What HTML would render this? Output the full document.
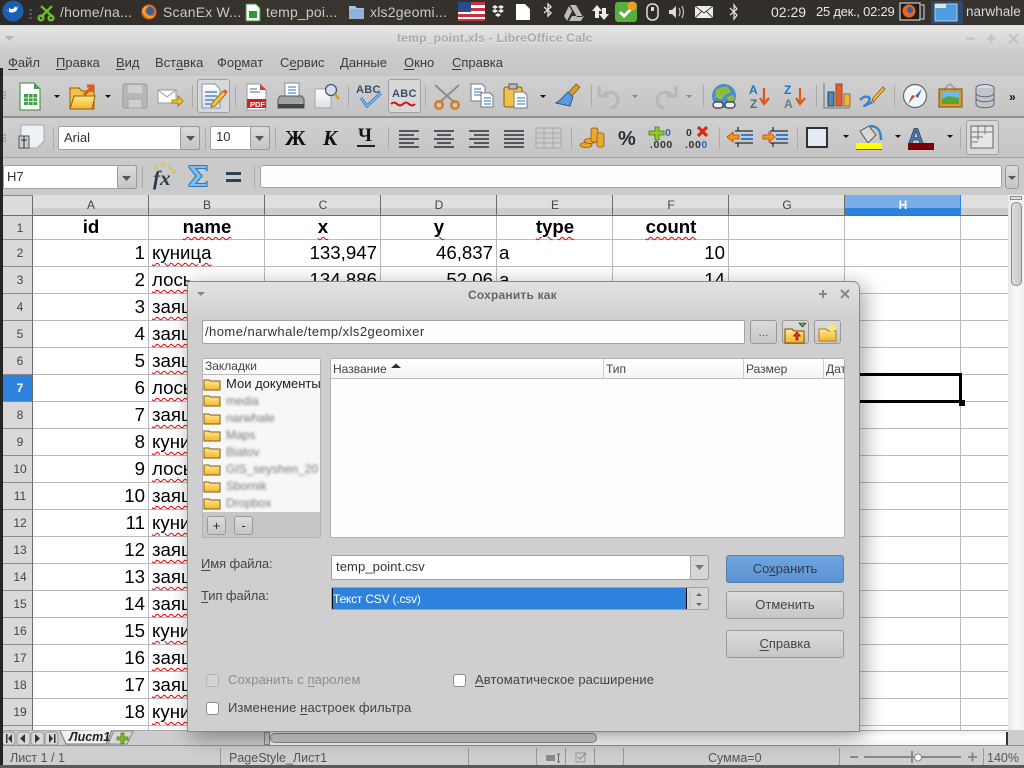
<!DOCTYPE html>
<html lang="ru"><head><meta charset="utf-8"><title>temp_point.xls - LibreOffice Calc</title>
<style>
html,body{margin:0;padding:0;width:1024px;height:768px;overflow:hidden;background:#ccc}
body{position:relative;font-family:"Liberation Sans","Noto Sans CJK SC",sans-serif;font-size:13px;color:#3c3c3c}
.a,.t,.c{position:absolute}
.t{white-space:nowrap;line-height:16px}
u{text-decoration:underline;text-underline-offset:2px;text-decoration-thickness:1px}
.p{color:#c9cbc8;top:3px;line-height:18px;font-size:14px;z-index:2}
.btn{position:absolute;box-sizing:border-box;border:1px solid #9a9a9a;border-radius:3px;background:linear-gradient(#dcdcdc,#c6c6c6);text-align:center}
.in{position:absolute;box-sizing:border-box;background:#fff;border:1px solid #a2a2a2;border-radius:2px}
.hd{position:absolute;top:195px;height:20px;width:116px;box-sizing:border-box;border-right:1px solid #6c6c6c;background:linear-gradient(#dfdfdf 0 65%,#cdcdcd 65%);text-align:center;line-height:21px;font-size:12px;color:#444;padding-left:1px}
.rn{position:absolute;left:3px;width:29px;box-sizing:border-box;border-bottom:1px solid #8c8c8c;text-align:center;font-size:12px;color:#444;padding-left:5px}
.c{white-space:nowrap;font-size:18.67px;line-height:27px;height:27px;color:#000}
.r{text-align:right;width:110px;left:35px}
.n{left:152px;text-decoration:underline wavy #e00;text-decoration-thickness:1px;text-underline-offset:3px}
.h{font-weight:bold;text-align:center;width:116px;top:213px;text-decoration:underline wavy #e00;text-decoration-thickness:1px;text-underline-offset:3px}
.bk{left:226px;color:#777;filter:blur(1.3px);font-size:12px}
.cb{position:absolute;width:13px;height:13px;box-sizing:border-box;background:#fff;border:1px solid #8a8a8a;border-radius:3px}
.sep{position:absolute;width:1px;background:#aaa}
</style></head><body>

<!-- top panel -->
<div class="a" style="left:0;top:0;width:1024px;height:25px;background:linear-gradient(90deg,#2d2a27,#3a352f 30%,#2f2b27 60%,#37332e)"></div>
<div class="a" style="left:0;top:25px;width:1024px;height:1px;background:#ddd"></div>
<div class="a" style="left:931px;top:1px;width:32px;height:23px;background:#2b4a6e"></div>
<div class="t p" style="left:60px;letter-spacing:.2px">/home/na...</div>
<div class="t p" style="left:163px;letter-spacing:.2px">ScanEx W...</div>
<div class="t p" style="left:266px;letter-spacing:.2px">temp_poi...</div>
<div class="t p" style="left:370px;letter-spacing:.2px">xls2geomi...</div>
<div class="t p" style="left:771px;color:#e8e8e8">02:29</div>
<div class="t p" style="left:816px;color:#e8e8e8;font-size:13px;letter-spacing:-.25px">25 дек., 02:29</div>
<div class="t p" style="left:966px;color:#d8d8d8;font-size:13.5px">narwhale</div>

<!-- window chrome -->
<div class="a" style="left:0;top:26px;width:1024px;height:50px;background:linear-gradient(#e6e6e6,#cbcbcb 55%,#c6c6c6)"></div>
<div class="a" style="left:0;top:76px;width:1024px;height:40px;background:linear-gradient(#d0d0d0,#c4c4c4)"></div>
<div class="a" style="left:0;top:116px;width:1024px;height:2px;background:#8f8f8f"></div>
<div class="a" style="left:0;top:118px;width:1024px;height:39px;background:linear-gradient(#d0d0d0,#c4c4c4)"></div>
<div class="a" style="left:0;top:157px;width:1024px;height:1px;background:#a0a0a0"></div>
<div class="a" style="left:0;top:158px;width:1024px;height:37px;background:#cacaca"></div>
<div class="a" style="left:0;top:68px;width:3px;height:697px;background:#262422;z-index:3"></div>

<div class="t" style="left:397px;top:30px;font-weight:bold;font-size:12px;color:#a9a9a9;text-shadow:0 1px 0 #eee;letter-spacing:.25px">temp_point.xls - LibreOffice Calc</div>

<div class="t" style="left:8px;top:55px"><u>Ф</u>айл</div>
<div class="t" style="left:56px;top:55px"><u>П</u>равка</div>
<div class="t" style="left:116px;top:55px"><u>В</u>ид</div>
<div class="t" style="left:155px;top:55px">Вст<u>а</u>вка</div>
<div class="t" style="left:217px;top:55px">Фо<u>р</u>мат</div>
<div class="t" style="left:280px;top:55px">С<u>е</u>рвис</div>
<div class="t" style="left:340px;top:55px"><u>Д</u>анные</div>
<div class="t" style="left:404px;top:55px"><u>О</u>кно</div>
<div class="t" style="left:452px;top:55px"><u>С</u>правка</div>

<!-- toggled toolbar boxes -->
<div class="a" style="left:197px;top:79px;width:33px;height:34px;box-sizing:border-box;border:1px solid #a0a0a0;border-radius:3px;background:#d8d8d8"></div>
<div class="a" style="left:388px;top:79px;width:33px;height:34px;box-sizing:border-box;border:1px solid #a0a0a0;border-radius:3px;background:#d8d8d8"></div>
<div class="a" style="left:966px;top:120px;width:33px;height:35px;box-sizing:border-box;border:1px solid #a0a0a0;border-radius:3px;background:#d8d8d8"></div>

<!-- separators -->
<div class="sep" style="left:192px;top:85px;height:22px"></div><div class="sep" style="left:235px;top:85px;height:22px"></div>
<div class="sep" style="left:348px;top:85px;height:22px"></div><div class="sep" style="left:425px;top:85px;height:22px"></div>
<div class="sep" style="left:591px;top:85px;height:22px"></div><div class="sep" style="left:703px;top:85px;height:22px"></div>
<div class="sep" style="left:816px;top:85px;height:22px"></div><div class="sep" style="left:894px;top:85px;height:22px"></div>
<div class="sep" style="left:53px;top:127px;height:22px"></div><div class="sep" style="left:205px;top:127px;height:22px"></div>
<div class="sep" style="left:275px;top:127px;height:22px"></div><div class="sep" style="left:388px;top:127px;height:22px"></div>
<div class="sep" style="left:571px;top:127px;height:22px"></div><div class="sep" style="left:719px;top:127px;height:22px"></div>
<div class="sep" style="left:797px;top:127px;height:22px"></div><div class="sep" style="left:960px;top:127px;height:22px"></div>
<div class="sep" style="left:142px;top:166px;height:22px"></div><div class="sep" style="left:254px;top:166px;height:22px"></div>

<!-- format toolbar fields -->
<div class="in" style="left:58px;top:126px;width:142px;height:24px"></div>
<div class="btn" style="left:180px;top:126px;width:20px;height:24px"></div>
<div class="t" style="left:64px;top:130px;font-size:13px;color:#333">Arial</div>
<div class="in" style="left:210px;top:126px;width:60px;height:24px"></div>
<div class="btn" style="left:250px;top:126px;width:20px;height:24px"></div>
<div class="t" style="left:216px;top:129px;font-size:13px;color:#333">10</div>
<div class="t" style="left:285px;top:126px;font:bold 21px/24px 'Liberation Serif',serif;color:#111">Ж</div>
<div class="t" style="left:323px;top:126px;font:italic bold 21px/24px 'Liberation Serif',serif;color:#111">К</div>
<div class="t" style="left:358px;top:124px;font:bold 19px/24px 'Liberation Serif',serif;color:#111">Ч</div>
<div class="a" style="left:357px;top:145px;width:18px;height:2px;background:#222"></div>
<div class="t" style="left:618px;top:127px;font:bold 20px/24px 'Liberation Sans',sans-serif;color:#25303c">%</div>

<!-- formula bar -->
<div class="in" style="left:3px;top:165px;width:134px;height:24px"></div>
<div class="btn" style="left:117px;top:165px;width:20px;height:24px"></div>
<div class="t" style="left:7px;top:169px;font-size:13px;color:#333">H7</div>
<div class="in" style="left:260px;top:165px;width:742px;height:23px;background:#fdfdfd;border-radius:3px"></div>
<div class="btn" style="left:1005px;top:165px;width:14px;height:24px"></div>
<div class="t" style="left:153px;top:166px;font:italic bold 21px/24px 'Liberation Serif',serif;color:#2b3a4a">fx</div>

<!-- sheet -->
<div class="a" style="left:3px;top:195px;width:1005px;height:1px;background:#8a8a8a"></div>
<div class="a" style="left:3px;top:196px;width:30px;height:534px;background:#d9d9d9"></div>
<div class="a" style="left:3px;top:196px;width:30px;height:19px;background:#dcdcdc"></div>
<div class="a" style="left:32px;top:196px;width:1px;height:534px;background:#6c6c6c"></div>
<div class="hd" style="left:33px">A</div><div class="hd" style="left:149px">B</div><div class="hd" style="left:265px">C</div>
<div class="hd" style="left:381px">D</div><div class="hd" style="left:497px">E</div><div class="hd" style="left:613px">F</div>
<div class="hd" style="left:729px">G</div>
<div class="hd" style="left:845px;background:linear-gradient(#79aeea 0 65%,#2c82dd 65%);color:#fff;font-weight:bold;border-right:1px solid #2c82dd">H</div>
<div class="hd" style="left:961px;width:47px;border-right:0"></div>
<div class="a" style="left:33px;top:215px;width:975px;height:515px;background:#fff"></div>
<div class="a" style="left:3px;top:215px;width:1005px;height:1px;background:#6c6c6c"></div>
<div class="a" style="left:33px;top:216px;width:975px;height:514px;background:repeating-linear-gradient(to right,transparent 0 115px,#bbb 115px 116px)"></div>
<div class="a" style="left:33px;top:239px;width:975px;height:1px;background:#bbb"></div>
<div class="a" style="left:33px;top:240px;width:975px;height:490px;background:repeating-linear-gradient(to bottom,transparent 0 26px,#bbb 26px 27px)"></div>

<div class="rn" style="top:216px;height:24px;line-height:24px">1</div>
<div class="rn" style="top:240px;height:27px;line-height:27px">2</div>
<div class="rn" style="top:267px;height:27px;line-height:27px">3</div>
<div class="rn" style="top:294px;height:27px;line-height:27px">4</div>
<div class="rn" style="top:321px;height:27px;line-height:27px">5</div>
<div class="rn" style="top:348px;height:27px;line-height:27px">6</div>
<div class="rn" style="top:375px;height:27px;line-height:27px;background:#2c82dd;color:#fff;font-weight:bold">7</div>
<div class="rn" style="top:402px;height:27px;line-height:27px">8</div>
<div class="rn" style="top:429px;height:27px;line-height:27px">9</div>
<div class="rn" style="top:456px;height:27px;line-height:27px">10</div>
<div class="rn" style="top:483px;height:27px;line-height:27px">11</div>
<div class="rn" style="top:510px;height:27px;line-height:27px">12</div>
<div class="rn" style="top:537px;height:27px;line-height:27px">13</div>
<div class="rn" style="top:564px;height:27px;line-height:27px">14</div>
<div class="rn" style="top:591px;height:27px;line-height:27px">15</div>
<div class="rn" style="top:618px;height:27px;line-height:27px">16</div>
<div class="rn" style="top:645px;height:27px;line-height:27px">17</div>
<div class="rn" style="top:672px;height:27px;line-height:27px">18</div>
<div class="rn" style="top:699px;height:27px;line-height:27px">19</div>

<div class="c h" style="left:33px;text-decoration:none">id</div>
<div class="c h" style="left:149px">name</div>
<div class="c h" style="left:265px">x</div>
<div class="c h" style="left:381px">y</div>
<div class="c h" style="left:497px">type</div>
<div class="c h" style="left:613px">count</div>

<div class="c r" style="top:239px">1</div><div class="c n" style="top:239px">куница</div>
<div class="c r" style="top:266px">2</div><div class="c n" style="top:266px">лось</div>
<div class="c r" style="top:293px">3</div><div class="c n" style="top:293px">заяц</div>
<div class="c r" style="top:320px">4</div><div class="c n" style="top:320px">заяц</div>
<div class="c r" style="top:347px">5</div><div class="c n" style="top:347px">заяц</div>
<div class="c r" style="top:374px">6</div><div class="c n" style="top:374px">лось</div>
<div class="c r" style="top:401px">7</div><div class="c n" style="top:401px">заяц</div>
<div class="c r" style="top:428px">8</div><div class="c n" style="top:428px">куница</div>
<div class="c r" style="top:455px">9</div><div class="c n" style="top:455px">лось</div>
<div class="c r" style="top:482px">10</div><div class="c n" style="top:482px">заяц</div>
<div class="c r" style="top:509px">11</div><div class="c n" style="top:509px">куница</div>
<div class="c r" style="top:536px">12</div><div class="c n" style="top:536px">заяц</div>
<div class="c r" style="top:563px">13</div><div class="c n" style="top:563px">заяц</div>
<div class="c r" style="top:590px">14</div><div class="c n" style="top:590px">заяц</div>
<div class="c r" style="top:617px">15</div><div class="c n" style="top:617px">куница</div>
<div class="c r" style="top:644px">16</div><div class="c n" style="top:644px">заяц</div>
<div class="c r" style="top:671px">17</div><div class="c n" style="top:671px">заяц</div>
<div class="c r" style="top:698px">18</div><div class="c n" style="top:698px">куница</div>

<div class="c" style="top:239px;left:267px;width:110px;text-align:right">133,947</div>
<div class="c" style="top:239px;left:383px;width:110px;text-align:right">46,837</div>
<div class="c" style="top:239px;left:499px">a</div>
<div class="c" style="top:239px;left:615px;width:110px;text-align:right">10</div>
<div class="c" style="top:266px;left:267px;width:110px;text-align:right">134,886</div>
<div class="c" style="top:266px;left:383px;width:110px;text-align:right">52,06</div>
<div class="c" style="top:266px;left:499px">a</div>
<div class="c" style="top:266px;left:615px;width:110px;text-align:right">14</div>

<!-- selected cell -->
<div class="a" style="left:844px;top:373px;width:118px;height:30px;box-sizing:border-box;border:3px solid #000"></div>
<div class="a" style="left:959px;top:400px;width:6px;height:6px;background:#000"></div>

<!-- scrollbars -->
<div class="a" style="left:1008px;top:195px;width:16px;height:551px;background:linear-gradient(90deg,#e8e8e8,#fafafa 50%,#f0f0f0)"></div>
<div class="a" style="left:1010px;top:196px;width:12px;height:4px;background:#e0e0e0;border:1px solid #888;box-sizing:border-box"></div>
<div class="a" style="left:1011px;top:202px;width:11px;height:84px;box-sizing:border-box;border:1px solid #8a8a8a;border-radius:5px;background:linear-gradient(90deg,#ddd,#c8c8c8)"></div>

<div class="a" style="left:0;top:730px;width:1024px;height:16px;background:#cdcdcd"></div>
<div class="a" style="left:0;top:730px;width:1008px;height:1px;background:#aaa"></div>
<div class="a" style="left:264px;top:731px;width:744px;height:15px;background:linear-gradient(#eee,#fff 40%,#f6f6f6)"></div>
<div class="a" style="left:264px;top:732px;width:6px;height:13px;box-sizing:border-box;border:1px solid #888;background:#ccc"></div>
<div class="a" style="left:270px;top:733px;width:327px;height:10px;box-sizing:border-box;border:1px solid #8a8a8a;border-radius:5px;background:linear-gradient(#ddd,#c8c8c8)"></div>
<div class="a" style="left:1006px;top:732px;width:2px;height:13px;background:#333"></div>
<div class="t" style="left:69px;top:729px;z-index:3;font:italic bold 12.5px/16px 'Liberation Sans',sans-serif;color:#222">Лист1</div>

<!-- status bar -->
<div class="a" style="left:0;top:745px;width:1024px;height:1px;background:#909090"></div>
<div class="a" style="left:0;top:746px;width:1024px;height:19px;background:#cfcfcf"></div>
<div class="a" style="left:0;top:765px;width:1024px;height:3px;background:#5a5a5a"></div>
<div class="sep" style="left:220px;top:748px;height:17px;background:#999"></div><div class="sep" style="left:468px;top:748px;height:17px;background:#999"></div>
<div class="sep" style="left:536px;top:748px;height:17px;background:#999"></div><div class="sep" style="left:565px;top:748px;height:17px;background:#999"></div>
<div class="sep" style="left:594px;top:748px;height:17px;background:#999"></div><div class="sep" style="left:623px;top:748px;height:17px;background:#999"></div>
<div class="sep" style="left:839px;top:748px;height:17px;background:#999"></div><div class="sep" style="left:983px;top:748px;height:17px;background:#999"></div>
<div class="t" style="left:10px;top:750px;font-size:12.5px;color:#555">Лист 1 / 1</div>
<div class="t" style="left:229px;top:750px;font-size:12.5px;color:#555">PageStyle_Лист1</div>
<div class="t" style="left:708px;top:750px;font-size:12.5px;color:#555">Сумма=0</div>
<div class="t" style="left:987px;top:750px;font-size:12.5px;color:#555">140%</div>

<!-- background icons -->
<svg class="a" style="left:0;top:0;z-index:2" width="1024" height="768" viewBox="0 0 1024 768">
<defs>
<linearGradient id="f" x1="0" y1="0" x2="0" y2="1"><stop offset="0" stop-color="#fee98f"/><stop offset="1" stop-color="#f4b62c"/></linearGradient>
<linearGradient id="b" x1="0" y1="0" x2="0" y2="1"><stop offset="0" stop-color="#fff"/><stop offset="1" stop-color="#d8e0ea"/></linearGradient>
<linearGradient id="g" x1="0" y1="0" x2="0" y2="1"><stop offset="0" stop-color="#7fb23a"/><stop offset="1" stop-color="#3f9b3a"/></linearGradient>
</defs>
<!-- window controls -->
<path d="M5 36h9l-4.500 5z" fill="#b5b5b5"/>
<path d="M966 38.500h9M987 38.500h9M991.500 34v9M1009 34l9 9M1018 34l-9 9" stroke="#c2c2c2" stroke-width="2.200" fill="none"/>
<!-- panel -->
<circle cx="13" cy="11" r="10.5" fill="#1b5fb0"/><path d="M6 9c2 4 8 5 11 1l1-4-2 2-1-2c-1 3-2 3-4 3l-2-1 0 4z" fill="#fff"/>
<path d="M29 9h3v2h-3zm0 4h3v2h-3zm0 4h3v2h-3z" fill="#555"/>
<g fill="none" stroke="#6dbb2a" stroke-width="2.4"><path d="M41 6l12 11M52 6L41 17"/><circle cx="41" cy="18" r="2.4"/><circle cx="51" cy="18" r="2.4"/></g>
<circle cx="149" cy="12" r="7.5" fill="#e8661b"/><circle cx="150" cy="11" r="4" fill="#2f62a8"/><path d="M142 10c2 9 10 10 14 5-3 2-9 2-11-4l3-5c-3 0-5 2-6 4z" fill="#f8a021"/>
<path d="M246 4h10l4 4v13h-14z" fill="#fff" stroke="#2d9a33"/><rect x="249" y="11" width="8" height="7" fill="#2d9a33"/>
<path d="M349 6h6l2 2h7v11h-15z" fill="#a7c7e6"/><rect x="349" y="9" width="15" height="10" fill="#8fb4d8"/>
<rect x="458" y="2" width="27" height="19" fill="#fff"/><path d="M458 2h27v3h-27zm0 6h27v3h-27zm0 6h27v3h-27zm0 5h27v2h-27z" fill="#c8313e"/><rect x="458" y="2" width="13" height="10" fill="#2b4c8c"/>
<path d="M497 4l-3 2 3 2 3-2zM503 4l-3 2 3 2 3-2zM494 10l3 2 3-2-3-2zM500 10l3 2 3-2-3-2zM497 14l3 2 3-2-3-2z" fill="#eee" transform="translate(-2 1)"/>
<path d="M516 4h9l5 5v11h-14z" fill="#fff"/>
<path d="M544 7l7 6-3 3V4l3 3-7 6" fill="none" stroke="#ddd" stroke-width="1.4"/>
<path d="M570 5h6l7 12h-6zM569 6l-5 10 3 5 5-10zM569 21h12l3-5h-12z" fill="#bbb"/>
<path d="M597 5l-5 6h3v7h4v-7h3zM604 20l5-6h-3V8h-4v6h-3z" fill="#eee"/>
<rect x="615" y="2" width="22" height="20" rx="3" fill="#56b039"/><path d="M620 12l4 4 7-7" fill="none" stroke="#fff" stroke-width="3"/><circle cx="632" cy="6" r="4.5" fill="#f59b23"/>
<rect x="647" y="4" width="11" height="16" rx="5" fill="none" stroke="#ddd" stroke-width="1.5"/><rect x="651" y="7" width="3" height="4" fill="#ddd"/>
<path d="M669 10h3l4-4v12l-4-4h-3z" fill="#ddd"/><path d="M679 8q2 4 0 8M682 6q3 6 0 12" fill="none" stroke="#bbb" stroke-width="1.3"/>
<rect x="695" y="6" width="18" height="12" fill="#eee"/><path d="M695 6l9 7 9-7M695 18l7-7M713 18l-7-7" fill="none" stroke="#444"/>
<path d="M730 8l7 7-3 4V5l3 4-7 6" fill="none" stroke="#ddd" stroke-width="1.3"/>
<rect x="900" y="3" width="20" height="17" fill="#1e1b18" stroke="#eee"/><circle cx="909" cy="11" r="6.5" fill="#e8661b"/><circle cx="910" cy="10" r="3" fill="#2f62a8"/><path d="M921 5h3v14h-3" fill="none" stroke="#ddd"/>
<rect x="935" y="4" width="22" height="17" fill="#4d9be0" stroke="#bcd"/><rect x="935" y="4" width="11" height="4" fill="#dcebd0"/>

<!-- toolbar 1 -->
<path d="M20 83h14l6 6v21H20z" fill="#fff" stroke="#2d8a34"/><path d="M34 83l6 6h-6z" fill="#39a845"/><rect x="24" y="94" width="13" height="11" fill="#3aa045"/><path d="M24 98h13M24 101.500h13M28.500 94v11M33 94v11" stroke="#d9f0db"/>
<path d="M54 95h6l-3 3z M105 95h6l-3 3z M540 95h6l-3 3z" fill="#111"/>
<path d="M70 88h9l3 3h12v18H70z" fill="#f2c14a" stroke="#9a5a00"/><path d="M70 109l4-13h21l-3 13z" fill="url(#f)" stroke="#9a5a00"/><path d="M84 95l8-8m-5-1h6v6" fill="none" stroke="#dd5a10" stroke-width="3"/>
<rect x="123" y="84" width="24" height="24" rx="2" fill="#b8b8b8" stroke="#999"/><rect x="128" y="85" width="14" height="8" fill="#d0d0d0"/><rect x="128" y="99" width="14" height="9" fill="#cfcfcf" stroke="#a5a5a5"/>
<rect x="158" y="90" width="18" height="13" fill="#fff" stroke="#999"/><path d="M158 90l9 7 9-7" fill="none" stroke="#999"/><path d="M172 100h6v-4l5 5-5 5v-3h-6z" fill="#f5c33b" stroke="#9a6a00" stroke-width=".8"/>
<path d="M202 84h13l5 5v19h-18z" fill="url(#b)" stroke="#8a97a5"/><path d="M205 92h12M205 96h12M205 100h9M205 104h6" stroke="#2f77b8" stroke-width="1.2"/><path d="M211 107l1-4 11-12 3 3-11 12z" fill="#f5c33b" stroke="#8a5a10" stroke-width=".8"/><path d="M223 91l2-2 3 3-2 2z" fill="#e55"/>
<path d="M247 84h13l6 6v20h-19z" fill="#fff" stroke="#999"/><path d="M260 84l6 6h-6z" fill="#d33"/><path d="M250 89h7M250 92h10" stroke="#2f77b8"/><rect x="247" y="99" width="19" height="9" fill="#e01b1b"/><text x="250" y="107" font-family="Liberation Sans" font-size="7.5" font-weight="bold" fill="#fff">PDF</text>
<rect x="285" y="83" width="14" height="14" fill="#fff" stroke="#888"/><path d="M288 87h8M288 90h8M288 93h8" stroke="#2f77b8"/><path d="M280 96h22l2 3v9h-26v-9z" fill="#9ea3a5" stroke="#555"/><rect x="278" y="104" width="26" height="4" fill="#444"/><rect x="299" y="102" width="3" height="2" fill="#7d4"/>
<path d="M315 89h16v19h-16z" fill="url(#b)" stroke="#9aa"/><circle cx="331" cy="90" r="5.500" fill="#cfe0f5" stroke="#555" stroke-width="1.300"/><path d="M335 94l4 5" stroke="#d69a1d" stroke-width="2.500"/>
<text x="356" y="93" font-family="Liberation Sans" font-size="11" font-weight="bold" fill="#3b5068" letter-spacing=".3">ABC</text><path d="M361 98l6 8 14-13" fill="none" stroke="#2f7fce" stroke-width="3"/><path d="M361 98l6 8 14-13" fill="none" stroke="#9cd0f5" stroke-width="1"/>
<text x="392" y="97" font-family="Liberation Sans" font-size="11" font-weight="bold" fill="#3b5068" letter-spacing=".3">ABC</text><path d="M391 104q3-3 6 0t6 0 6 0 6 0" fill="none" stroke="#d01515" stroke-width="2"/>
<path d="M435 85l20 18M459 85l-20 18" stroke="#8a8f92" stroke-width="2"/><circle cx="439" cy="105" r="3.800" fill="none" stroke="#d9791b" stroke-width="2.400"/><circle cx="455" cy="105" r="3.800" fill="none" stroke="#d9791b" stroke-width="2.400"/>
<path d="M471 84h11l3 3v14h-14z" fill="#fff" stroke="#778"/><path d="M474 89h7M474 92h8M474 95h8" stroke="#2f77b8"/><path d="M481 93h9l3 3v11h-12z" fill="#fff" stroke="#778"/><path d="M484 98h7M484 101h7M484 104h7" stroke="#2f77b8"/>
<rect x="504" y="87" width="18" height="20" rx="2" fill="#f2c14a" stroke="#8a5a10"/><rect x="509" y="84" width="8" height="5" fill="#bbb" stroke="#555"/><path d="M514 92h10l3 3v13h-13z" fill="#fff" stroke="#778"/><path d="M517 98h8M517 101h8M517 104h8" stroke="#2f77b8"/>
<path d="M576 84l4 3-8 9-4-3z" fill="#d69a3d" stroke="#8a5a10" stroke-width=".8"/><path d="M568 92l5 5-3 9-14-3 c4-2 8-7 12-11z" fill="#5a9be0" stroke="#2a5fa0"/>
<g opacity=".55" fill="none" stroke="#aaa" stroke-width="3"><path d="M603 96a8 8 0 1 1 8 12"/><path d="M599 86v10h10"/><path d="M672 96a8 8 0 1 0-8 12"/><path d="M676 86v10h-10"/></g>
<path d="M632 95h6l-3 3zM686 95h6l-3 3z" fill="#888"/>
<circle cx="724" cy="96" r="12" fill="#4b8dc9"/><path d="M716 90c4-3 9-4 12-3l3 5-6 3-4 5-6-3z" fill="#8fbb3c"/><path d="M727 97l6-2 2 4-6 4z" fill="#8fbb3c"/><rect x="713" y="102" width="10" height="6" rx="3" fill="#eee" stroke="#334" stroke-width="1.200"/><rect x="725" y="102" width="10" height="6" rx="3" fill="#eee" stroke="#334" stroke-width="1.200"/>
<text x="749" y="94" font-family="Liberation Sans" font-size="12" font-weight="bold" fill="#2273c9">A</text><text x="750" y="108" font-family="Liberation Sans" font-size="12" font-weight="bold" fill="#5a6b78">Z</text>
<path d="M764 88v14M760 98l4 6 5-6" fill="none" stroke="#e0561a" stroke-width="2.200"/>
<text x="784" y="94" font-family="Liberation Sans" font-size="12" font-weight="bold" fill="#2273c9">Z</text><text x="784" y="108" font-family="Liberation Sans" font-size="12" font-weight="bold" fill="#6a7b88">A</text>
<path d="M800 88v14M796 98l4 6 5-6" fill="none" stroke="#e0561a" stroke-width="2.200"/>
<rect x="828" y="92" width="6" height="14" fill="#4f87b5" stroke="#345"/><rect x="836" y="84" width="6" height="22" fill="#e0602a" stroke="#943"/><rect x="844" y="94" width="6" height="12" fill="#f5b62e" stroke="#964"/><path d="M824 83v25h26" fill="none" stroke="#6a7580"/>
<path d="M860 100c4-5 12-4 9 1s-7 6-3 4 8-3 7-3" fill="none" stroke="#3d82cc" stroke-width="2.500"/><path d="M873 98l10-11 2 2-10 11-3 1z" fill="#f5c33b" stroke="#8a5a10" stroke-width=".8"/>
<circle cx="915" cy="96" r="11.500" fill="#f5f7fa" stroke="#567" stroke-width="1.200"/><path d="M915 96l7-7-4 9z" fill="#2f77c8"/><path d="M915 96l-7 8 4-9z" fill="#d93c2b"/>
<path d="M950 84l-6 5h12z" fill="none" stroke="#888"/><rect x="939" y="89" width="23" height="18" fill="#d79a2b" stroke="#7a5210"/><rect x="942" y="92" width="17" height="12" fill="#6db9e8"/><path d="M942 104v-5l6-3 11 2v6z" fill="#5ca33a"/>
<ellipse cx="985" cy="88" rx="9" ry="3.500" fill="#d8dde2" stroke="#667"/><path d="M976 88v16c0 5 18 5 18 0V88" fill="#bfc5ca" stroke="#667"/><path d="M976 93c0 5 18 5 18 0M976 98c0 5 18 5 18 0" fill="none" stroke="#667"/>
<text x="1009" y="101" font-family="Liberation Sans" font-size="12" font-weight="bold" fill="#111">»</text>
<path d="M3 92h3M3 95h3M3 98h3" stroke="#888"/>

<!-- toolbar 2 -->
<path d="M3 135h3M3 138h3M3 141h3" stroke="#888"/>
<path d="M21 125h23v16l-7 7H28v-5h-7z" fill="#eef1f6" stroke="#a5aab0"/><rect x="19" y="136" width="10" height="12" fill="#c8cdd2" stroke="#555"/><path d="M24 136v12M21 140h6" stroke="#333"/>
<path d="M186 136h9l-4.500 5z M255 136h9l-4.500 5z M122 176h9l-4.500 5z M1008 176h8l-4 4z" fill="#555"/>
<g stroke="#2a3038" stroke-width="1.500"><path d="M399 131h20M399 135h15M399 139h20M399 143h15M399 147h20"/><path d="M434 131h20M437 135h14M434 139h20M437 143h14M434 147h20"/><path d="M469 131h20M474 135h15M469 139h20M474 143h15M469 147h20"/><path d="M504 131h20M504 135h20M504 139h20M504 143h20M504 147h20"/></g>
<rect x="536" y="128" width="25" height="20" fill="#ccc" stroke="#a8a8a8"/><path d="M536 133h25M536 138h25M536 143h25M544 128v20M553 128v20" stroke="#aaa"/>
<g fill="#eaa92a" stroke="#8a5a10" stroke-width=".8"><ellipse cx="586" cy="145" rx="6" ry="2.500"/><ellipse cx="590" cy="141" rx="6" ry="2.500"/><rect x="591" y="128" width="7" height="14" rx="2"/><rect x="597" y="133" width="7" height="14" rx="2"/></g>
<path d="M649 131h6v-4h4v4h5v4h-5v5h-4v-5h-6z" fill="#8ccb2b" stroke="#4a7a10" stroke-width=".8"/>
<text x="665" y="136" font-family="Liberation Sans" font-size="10.500" font-weight="bold" fill="#2a68c4">0</text>
<text x="650" y="148" font-family="Liberation Sans" font-size="10.500" font-weight="bold" fill="#333" letter-spacing=".6">.000</text>
<text x="686" y="136" font-family="Liberation Sans" font-size="10.500" font-weight="bold" fill="#333">0</text>
<path d="M698 127l9 9M707 127l-9 9" stroke="#e0261b" stroke-width="3.200"/>
<text x="685" y="148" font-family="Liberation Sans" font-size="10.500" font-weight="bold" fill="#333" letter-spacing=".6">.00<tspan fill="#2a68c4">0</tspan></text>
<g stroke="#2a3038" stroke-width="1.300"><path d="M738 127v4M738 147v-4M735 131h18M735 143h18"/><path d="M773 127v4M773 147v-4M770 131h18M770 143h18"/></g>
<path d="M741 135h12M741 139h12M776 135h12M776 139h12" stroke="#1f6fd0" stroke-width="1.800"/>
<path d="M727 137l6-5v3h6v4h-6v3z" fill="#f39a1d" stroke="#c23d0a" stroke-width=".8"/><path d="M775 137l-6-5v3h-6v4h6v3z" fill="#f39a1d" stroke="#c23d0a" stroke-width=".8"/>
<rect x="807" y="128" width="20" height="19" fill="#e4ebf3" stroke="#2c3138" stroke-width="2"/>
<path d="M843 135h6l-3 3zM895 135h6l-3 3zM947 135h6l-3 3z" fill="#111"/>
<path d="M860 131l9-5 7 9-8 8z" fill="#d8d8d8" stroke="#555"/><path d="M870 126c8 0 11 5 11 14" fill="none" stroke="#3586c8" stroke-width="2.500"/><rect x="856" y="143" width="26" height="6" fill="#ff0"/><rect x="856" y="149" width="26" height="1" fill="#d22"/>
<text x="908" y="144" font-family="Liberation Sans" font-size="22" font-weight="bold" fill="#4f7aa6" stroke="#24405f" stroke-width=".7">A</text><rect x="908" y="143" width="26" height="7" fill="#7d0000"/>
<rect x="971" y="126" width="22" height="22" fill="#e6e6e6" stroke="#666"/><path d="M971 132h22M971 137h12M971 142h7M978 126v14M985 126v8" stroke="#777"/>

<!-- formula bar -->
<path d="M154 168l2-2 2 2-2 2zM161 165l2-2 2 2-2 2zM168 168l2-2 2 2-2 2zM172 172l2-2 2 2-2 2z" fill="#f5d22e" stroke="#aa7" stroke-width=".5"/>
<path d="M189 165.500h18v5l-2-2h-9l6 7.500-6 7.500h9l2-2v5h-18v-2l7-8.500-7-8.500z" fill="#7cc0ee" stroke="#2a78c0" stroke-width="1.100"/>
<rect x="226" y="172" width="15" height="3" fill="#2d4256"/><rect x="226" y="179" width="15" height="3" fill="#2d4256"/>

<!-- sheet tabs -->
<g fill="#d8d8d8" stroke="#999"><rect x="2" y="732" width="13" height="13" rx="3"/><rect x="17" y="732" width="13" height="13" rx="3"/><rect x="31" y="732" width="13" height="13" rx="3"/><rect x="45" y="732" width="13" height="13" rx="3"/></g>
<path d="M6 734v9h1.500v-9zM12 734l-4 4.500 4 4.500zM25 734l-5 4.500 5 4.500zM35 734l5 4.500-5 4.500zM49 734l4 4.500-4 4.500zM54 734v9h1.500v-9z" fill="#333"/>
<path d="M60 731l6 13h40l6-14" fill="#f0f0f0" stroke="#777"/>
<path d="M108 744l6-13h19l-6 13z" fill="#d8d8d8" stroke="#888"/>
<path d="M117 737h4v-4h3v4h4v3h-4v4h-3v-4h-4z" fill="#7dbb29" stroke="#4a7a10" stroke-width=".7"/>

<!-- status -->
<rect x="546" y="755" width="9" height="6" fill="#8a8a8a"/><path d="M557 754h3M558.500 754v8M557 762h3" stroke="#666"/>
<rect x="576" y="753" width="9" height="9" fill="none" stroke="#999"/><path d="M578 757l2 2 6-6" fill="none" stroke="#888"/>
<path d="M850 757h8M864 757h97M968 757h9M972.500 752.500v9" stroke="#888" stroke-width="2"/><path d="M912 751v12" stroke="#888" stroke-width="2"/><circle cx="918" cy="757.500" r="3.500" fill="#fff" stroke="#888"/>
</svg>

<!-- dialog -->
<div class="a" style="left:187px;top:281px;width:673px;height:451px;box-sizing:border-box;z-index:5;border:1px solid #8a8a8a;border-top-right-radius:7px;border-top-left-radius:3px;background:linear-gradient(#e2e2e2,#cfcfcf 38px);box-shadow:4px 5px 22px rgba(0,0,0,.38)"></div>
<div style="position:absolute;left:0;top:0;width:1024px;height:768px;z-index:6">
<div class="t" style="left:468px;top:287px;font-weight:bold;font-size:12px;color:#666;letter-spacing:.2px">Сохранить как</div>
<div class="in" style="left:202px;top:320px;width:543px;height:24px;background:#fdfdfd"></div>
<div class="t" style="left:205px;top:324px;font-size:13px;color:#333;letter-spacing:.45px">/home/narwhale/temp/xls2geomixer</div>
<div class="btn" style="left:750px;top:320px;width:27px;height:24px;line-height:22px;color:#555;font-size:12px">...</div>
<div class="btn" style="left:782px;top:320px;width:27px;height:24px"></div>
<div class="btn" style="left:814px;top:320px;width:27px;height:24px"></div>

<div class="a" style="left:202px;top:358px;width:119px;height:180px;box-sizing:border-box;background:#c6c6c6;border:1px solid #b2b2b2;border-radius:2px"></div>
<div class="a" style="left:203px;top:359px;width:117px;height:15px;background:#fbfbfb"></div>
<div class="a" style="left:203px;top:374px;width:117px;height:1px;background:#bbb"></div>
<div class="a" style="left:203px;top:375px;width:117px;height:137px;background:#f7f7f7;overflow:hidden"></div>
<div class="t" style="left:205px;top:359px;font-size:12px;line-height:15px;color:#444">Закладки</div>
<div class="t" style="left:226px;top:376px;font-size:13px;color:#222;width:94px;overflow:hidden">Мои документы</div>
<div class="t bk" style="top:393px">media</div>
<div class="t bk" style="top:410px">narwhale</div>
<div class="t bk" style="top:427px">Maps</div>
<div class="t bk" style="top:444px">Biatov</div>
<div class="t bk" style="top:461px">GIS_seyshen_20</div>
<div class="t bk" style="top:478px">Sbornik</div>
<div class="t bk" style="top:495px">Dropbox</div>
<div class="btn" style="left:207px;top:516px;width:19px;height:19px;line-height:17px;color:#333;font-size:13px">+</div>
<div class="btn" style="left:234px;top:516px;width:19px;height:19px;line-height:17px;color:#333;font-size:13px">-</div>

<div class="a" style="left:330px;top:358px;width:515px;height:180px;box-sizing:border-box;background:#fdfdfd;border:1px solid #b2b2b2;border-radius:2px"></div>
<div class="a" style="left:331px;top:359px;width:513px;height:19px;background:linear-gradient(#fff,#f4f4f4);border-bottom:1px solid #bbb"></div>
<div class="a" style="left:603px;top:359px;width:1px;height:19px;background:#ccc"></div>
<div class="a" style="left:743px;top:359px;width:1px;height:19px;background:#ccc"></div>
<div class="a" style="left:823px;top:359px;width:1px;height:19px;background:#ccc"></div>
<div class="t" style="left:333px;top:361px;font-size:12px;color:#444">Название</div>
<div class="t" style="left:606px;top:361px;font-size:12px;color:#444">Тип</div>
<div class="t" style="left:746px;top:361px;font-size:12px;color:#444">Размер</div>
<div class="t" style="left:826px;top:361px;font-size:12px;color:#444;width:18px;overflow:hidden">Дата</div>

<div class="t" style="left:201px;top:556px;color:#444;letter-spacing:-.1px"><u>И</u>мя файла:</div>
<div class="t" style="left:201px;top:588px;color:#444;letter-spacing:-.1px"><u>Т</u>ип файла:</div>
<div class="in" style="left:331px;top:555px;width:360px;height:25px"></div>
<div class="btn" style="left:690px;top:555px;width:19px;height:25px;border-left:1px solid #aaa;background:#d6d6d6"></div>
<div class="t" style="left:336px;top:559px;color:#333;letter-spacing:.1px">temp_point.csv</div>
<div class="a" style="left:331px;top:587px;width:378px;height:23px;box-sizing:border-box;border:1px solid #a2a2a2;border-radius:2px;background:#d4d4d4"></div>
<div class="a" style="left:332px;top:588px;width:354px;height:21px;background:#2c82dd"></div>
<div class="a" style="left:332px;top:588px;width:1px;height:21px;background:#000"></div>
<div class="a" style="left:686px;top:588px;width:1px;height:21px;background:#000"></div>
<div class="t" style="left:333px;top:591px;color:#fff;font-size:12px;letter-spacing:-.2px">Текст CSV (.csv)</div>

<div class="btn" style="left:726px;top:555px;width:118px;height:28px;line-height:26px;background:linear-gradient(#6fa4df,#5c93d2);border-color:#5a7fa8;color:#2e3c4c"><span>Со<u>х</u>ранить</span></div>
<div class="btn" style="left:726px;top:591px;width:118px;height:28px;line-height:26px;color:#444">Отменить</div>
<div class="btn" style="left:726px;top:630px;width:118px;height:28px;line-height:26px;color:#444"><u>С</u>правка</div>

<div class="cb" style="left:206px;top:674px;background:#d4d4d4;border-color:#b4b4b4"></div>
<div class="t" style="left:228px;top:672px;color:#8c8c8c;letter-spacing:.1px">Сохранить с <u>п</u>аролем</div>
<div class="cb" style="left:206px;top:702px"></div>
<div class="t" style="left:228px;top:700px;color:#444;letter-spacing:.1px">Изменение <u>н</u>астроек фильтра</div>
<div class="cb" style="left:453px;top:674px"></div>
<div class="t" style="left:475px;top:672px;color:#444;letter-spacing:.1px"><u>А</u>втоматическое расширение</div>

<svg class="a" style="left:0;top:0" width="1024" height="768" viewBox="0 0 1024 768">
<path d="M197 292h8l-4 4z" fill="#888"/>
<path d="M819 294h8M823 290v8M841 290l8 8M849 290l-8 8" stroke="#888" stroke-width="2" fill="none"/>
<path d="M785 329h7l2 2h10v12h-19z" fill="url(#f)" stroke="#7a4a00"/><path d="M796 340v-4h-2.500l3.500-4 3.500 4H798v4z" fill="#e33" stroke="#800" stroke-width=".7"/><path d="M799 323h7l-3.500 4z" fill="#3c3" stroke="#222" stroke-width=".6"/>
<path d="M819 329h7l2 2h8v10h-17z" fill="url(#f)" stroke="#b08020"/><circle cx="832" cy="328" r="3.500" fill="#ffe96a"/>
<path d="M391 368l5-4.500 5 4.500z" fill="#333"/>
<path d="M695 565h9l-4.500 5z" fill="#777"/>
<path d="M696 596l3-3 3 3zM696 603l3 3 3-3z" fill="#666"/><path d="M690 590v17" stroke="#bbb"/>
<g fill="url(#f)" stroke="#8a5a10">
<path d="M204 380h5l1 1h10v9h-16z"/>
<path d="M204 396h5l1 1h10v9h-16z"/><path d="M204 414h5l1 1h10v9h-16z"/><path d="M204 431h5l1 1h10v9h-16z"/><path d="M204 448h5l1 1h10v9h-16z"/><path d="M204 465h5l1 1h10v9h-16z"/><path d="M204 482h5l1 1h10v9h-16z"/><path d="M204 499h5l1 1h10v9h-16z"/>
</g>
</svg>
</div>
</body></html>
